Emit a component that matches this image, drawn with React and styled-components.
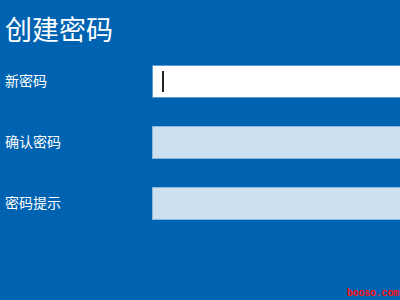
import React from 'react'
import styled, { createGlobalStyle } from 'styled-components'

const Global = createGlobalStyle`
  html, body {
    margin: 0;
    padding: 0;
    background: #0063b1;
  }
  body {
    font-family: "Noto Sans CJK SC", "Noto Sans", sans-serif;
  }
`

const Page = styled.div`
  position: relative;
  width: 400px;
  height: 300px;
  overflow: hidden;
  background: #0063b1;
  color: #fff;
  box-sizing: border-box;
  padding: 11px 0 0 5px;
`

const Title = styled.h1`
  margin: 0;
  font-size: 27px;
  font-weight: 400;
  line-height: 36px;
`

const Form = styled.div`
  display: flex;
  flex-direction: column;
  gap: 28px;
  margin-top: 18px;
`

const Row = styled.div`
  display: flex;
  align-items: center;
  height: 33px;
`

const Label = styled.div`
  width: 147px;
  font-size: 14px;
  line-height: 20px;
  padding-bottom: 4px;
`

const Field = styled.div`
  position: relative;
  flex: 1;
  height: 33px;
  box-sizing: border-box;
  margin-right: -10px;
  background: ${p => (p.$active ? '#ffffff' : '#cde0ef')};
  border: 1px solid ${p => (p.$active ? '#5a9bd1' : '#8cb8de')};
`

const Caret = styled.span`
  position: absolute;
  left: 9px;
  top: 5px;
  width: 1.5px;
  height: 21px;
  background: #222;
`

const Mark = styled.div`
  position: absolute;
  right: 1px;
  bottom: 2px;
  font-family: "Liberation Mono", monospace;
  font-size: 10px;
  font-weight: 700;
  line-height: 9px;
  letter-spacing: -0.2px;
  color: #ff1010;
`

export default function App() {
  return (
    <Page>
      <Global />
      <Title>创建密码</Title>
      <Form>
        <Row>
          <Label>新密码</Label>
          <Field $active>
            <Caret />
          </Field>
        </Row>
        <Row>
          <Label>确认密码</Label>
          <Field />
        </Row>
        <Row>
          <Label>密码提示</Label>
          <Field />
        </Row>
      </Form>
      <Mark>booso.com</Mark>
    </Page>
  )
}
